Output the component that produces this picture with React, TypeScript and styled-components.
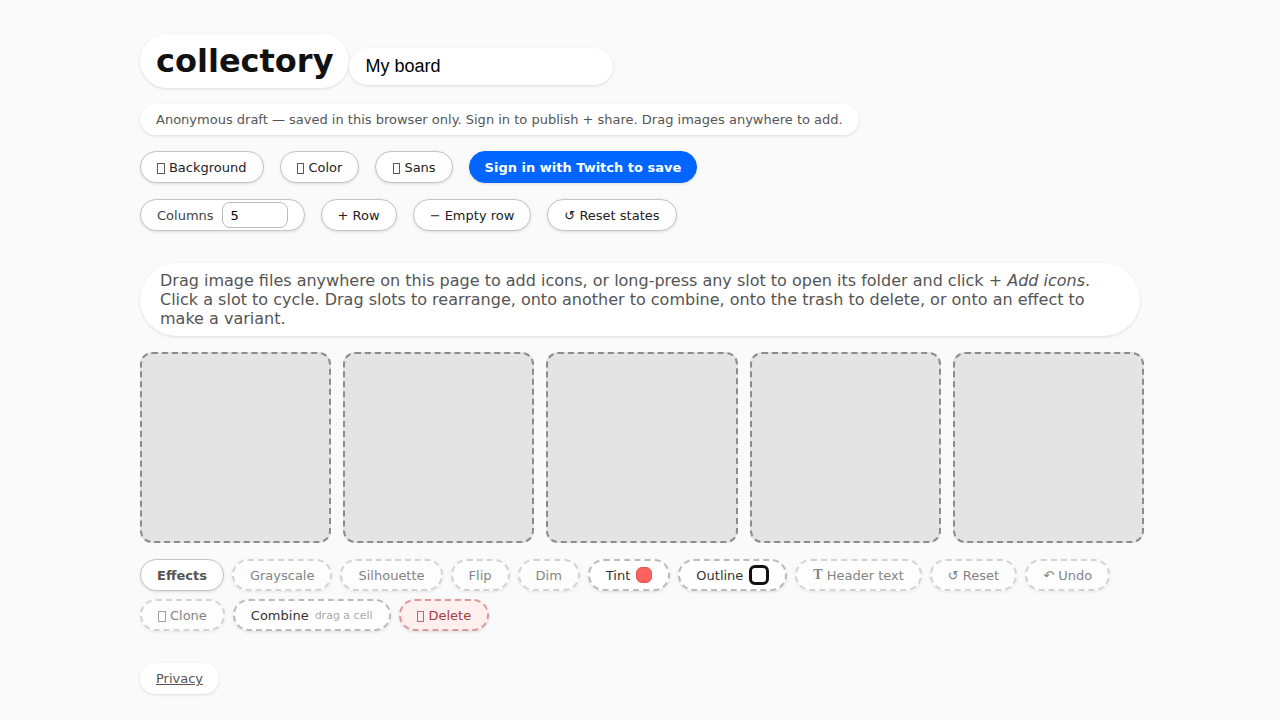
import React, { useState } from "react";
import styled, { createGlobalStyle, css } from "styled-components";

const Global = createGlobalStyle`
  * { box-sizing: border-box; }
  html { background: #fafafa; }
  body {
    margin: 0;
    color: #111;
    font-family: "DejaVu Sans", sans-serif;
    overflow: hidden;
  }
`;

const Page = styled.main`
  width: 1000px;
  min-height: 720px;
  margin: 0 auto;
  padding: 34px 0 24px;
  display: flex;
  flex-direction: column;
  align-items: flex-start;
`;

const surface = css`
  background: #fff;
  border-radius: 999px;
  box-shadow: 0 1px 3px rgba(0, 0, 0, 0.12);
`;

const Header = styled.header`
  display: flex;
  align-items: flex-end;
`;

const Title = styled.h1`
  ${surface}
  margin: 0;
  height: 54px;
  padding: 8px 16px;
  font-size: 32px;
  line-height: 38px;
  font-weight: 700;
`;

const BoardName = styled.input`
  ${surface}
  width: 264px;
  height: 37px;
  margin: 0 0 3px;
  padding: 0 16px;
  border: 0;
  outline: 0;
  color: #000;
  font: 18px "Liberation Sans", Arial, sans-serif;
`;

const Note = styled.p`
  ${surface}
  margin: 16px 0 0;
  height: 31px;
  padding: 0 16px;
  color: #555;
  font-size: 13px;
  line-height: 31px;
  white-space: nowrap;
`;

const Toolbar = styled.div`
  display: flex;
  gap: 16px;
  margin-top: 16px;
`;

const Button = styled.button<{ $primary?: boolean }>`
  ${surface}
  height: 32px;
  padding: 0 16px;
  border: 1px solid #c4c4c4;
  color: #222;
  font: 13px "DejaVu Sans", sans-serif;
  white-space: nowrap;
  ${(p) =>
    p.$primary &&
    css`
      padding: 0 15px;
      background: #06f;
      border-color: #06f;
      color: #fff;
      font-weight: 700;
    `}
`;

const BoxGlyph = styled.i`
  display: inline-block;
  width: 7.5px;
  height: 11px;
  margin: 0 4.07px 0 0.4px;
  border: 1px solid currentColor;
  opacity: 0.75;
  vertical-align: -2px;
`;

const ColumnsField = styled.label`
  ${surface}
  display: flex;
  align-items: center;
  gap: 8px;
  height: 32px;
  padding: 0 16px;
  border: 1px solid #c4c4c4;
  color: #444;
  font-size: 13px;
`;

const ColumnsInput = styled.input`
  width: 66px;
  height: 26px;
  padding: 0 8px;
  border: 1px solid #bbb;
  border-radius: 8px;
  outline: 0;
  background: #fff;
  color: #000;
  font: 13px "DejaVu Sans", sans-serif;
`;

const Help = styled.p`
  ${surface}
  width: 1000px;
  height: 73px;
  margin: 32px 0 16px;
  padding: 8px 20px;
  color: #555;
  font-size: 16px;
  line-height: 19px;
`;

const Board = styled.div`
  display: grid;
  grid-template-columns: repeat(5, 1fr);
  gap: 12px;
  width: 1004px;
`;

const Slot = styled.div`
  aspect-ratio: 1;
  border: 2px dashed #8c8c8c;
  border-radius: 12px;
  background: #e4e4e4;
`;

const Effects = styled.div`
  display: flex;
  flex-wrap: wrap;
  gap: 8px;
  width: 1000px;
  margin-top: 16px;
`;

const EffectsLabel = styled.span`
  ${surface}
  display: flex;
  align-items: center;
  height: 32px;
  padding: 0 16px;
  border: 1px solid #c4c4c4;
  color: #555;
  font-size: 13px;
  font-weight: 700;
`;

const Effect = styled.span<{ $muted?: boolean; $danger?: boolean }>`
  ${surface}
  display: flex;
  align-items: center;
  gap: 6px;
  height: 32px;
  padding: 0 16px;
  border: 2px dashed #bbb;
  color: #333;
  font-size: 13px;
  white-space: nowrap;
  opacity: ${(p) => (p.$muted ? 0.6 : 1)};
  ${(p) =>
    p.$danger &&
    css`
      background: #ffefef;
      border-color: #d99;
      color: #a04040;
    `}
`;

const EffectText = styled.span`
  padding-top: 2px;
  line-height: 16px;
`;

const SerifT = styled.b`
  margin-right: 4px;
  font: 700 14px/14px "Liberation Serif", serif;
  vertical-align: 1px;
`;

const TintSwatch = styled.i`
  width: 16px;
  height: 16px;
  border: 1px solid #d95858;
  border-radius: 6px;
  background: #ff6060;
`;

const OutlineSwatch = styled.i`
  width: 20px;
  height: 20px;
  border: 3px solid #111;
  border-radius: 6px;
  background: #fff;
`;

const Hint = styled.small`
  color: #aaa;
  font-size: 11px;
`;

const Footer = styled.footer`
  ${surface}
  height: 31px;
  margin-top: 32px;
  padding: 0 16px;
  font-size: 13px;
  line-height: 31px;
`;

const FooterLink = styled.a`
  color: #555;
  text-decoration: underline;
`;

export default function App() {
  const [name, setName] = useState("My board");
  const [columns, setColumns] = useState("5");
  return (
    <>
      <Global />
      <Page>
        <Header>
          <Title>collectory</Title>
          <BoardName value={name} onChange={(e) => setName(e.target.value)} />
        </Header>
        <Note>
          Anonymous draft — saved in this browser only. Sign in to publish + share. Drag images anywhere to add.
        </Note>
        <Toolbar>
          <Button><BoxGlyph />Background</Button>
          <Button><BoxGlyph />Color</Button>
          <Button><BoxGlyph />Sans</Button>
          <Button $primary>Sign in with Twitch to save</Button>
        </Toolbar>
        <Toolbar>
          <ColumnsField>
            Columns
            <ColumnsInput value={columns} onChange={(e) => setColumns(e.target.value)} />
          </ColumnsField>
          <Button>+ Row</Button>
          <Button>− Empty row</Button>
          <Button>↺ Reset states</Button>
        </Toolbar>
        <Help>
          Drag image files anywhere on this page to add icons, or long-press any slot to open its folder and click{" "}
          <em>+ Add icons</em>. Click a slot to cycle. Drag slots to rearrange, onto another to combine, onto the trash
          to delete, or onto an effect to make a variant.
        </Help>
        <Board>
          {Array.from({ length: 5 }, (_, i) => (
            <Slot key={i} />
          ))}
        </Board>
        <Effects>
          <EffectsLabel>Effects</EffectsLabel>
          <Effect $muted>Grayscale</Effect>
          <Effect $muted>Silhouette</Effect>
          <Effect $muted>Flip</Effect>
          <Effect $muted>Dim</Effect>
          <Effect>
            Tint
            <TintSwatch />
          </Effect>
          <Effect>
            Outline
            <OutlineSwatch />
          </Effect>
          <Effect $muted><EffectText><SerifT>T</SerifT>Header text</EffectText></Effect>
          <Effect $muted>↺ Reset</Effect>
          <Effect $muted>↶ Undo</Effect>
          <Effect $muted><EffectText><BoxGlyph />Clone</EffectText></Effect>
          <Effect>
            Combine
            <Hint>drag a cell</Hint>
          </Effect>
          <Effect $danger><EffectText><BoxGlyph />Delete</EffectText></Effect>
        </Effects>
        <Footer>
          <FooterLink>Privacy</FooterLink>
        </Footer>
      </Page>
    </>
  );
}
